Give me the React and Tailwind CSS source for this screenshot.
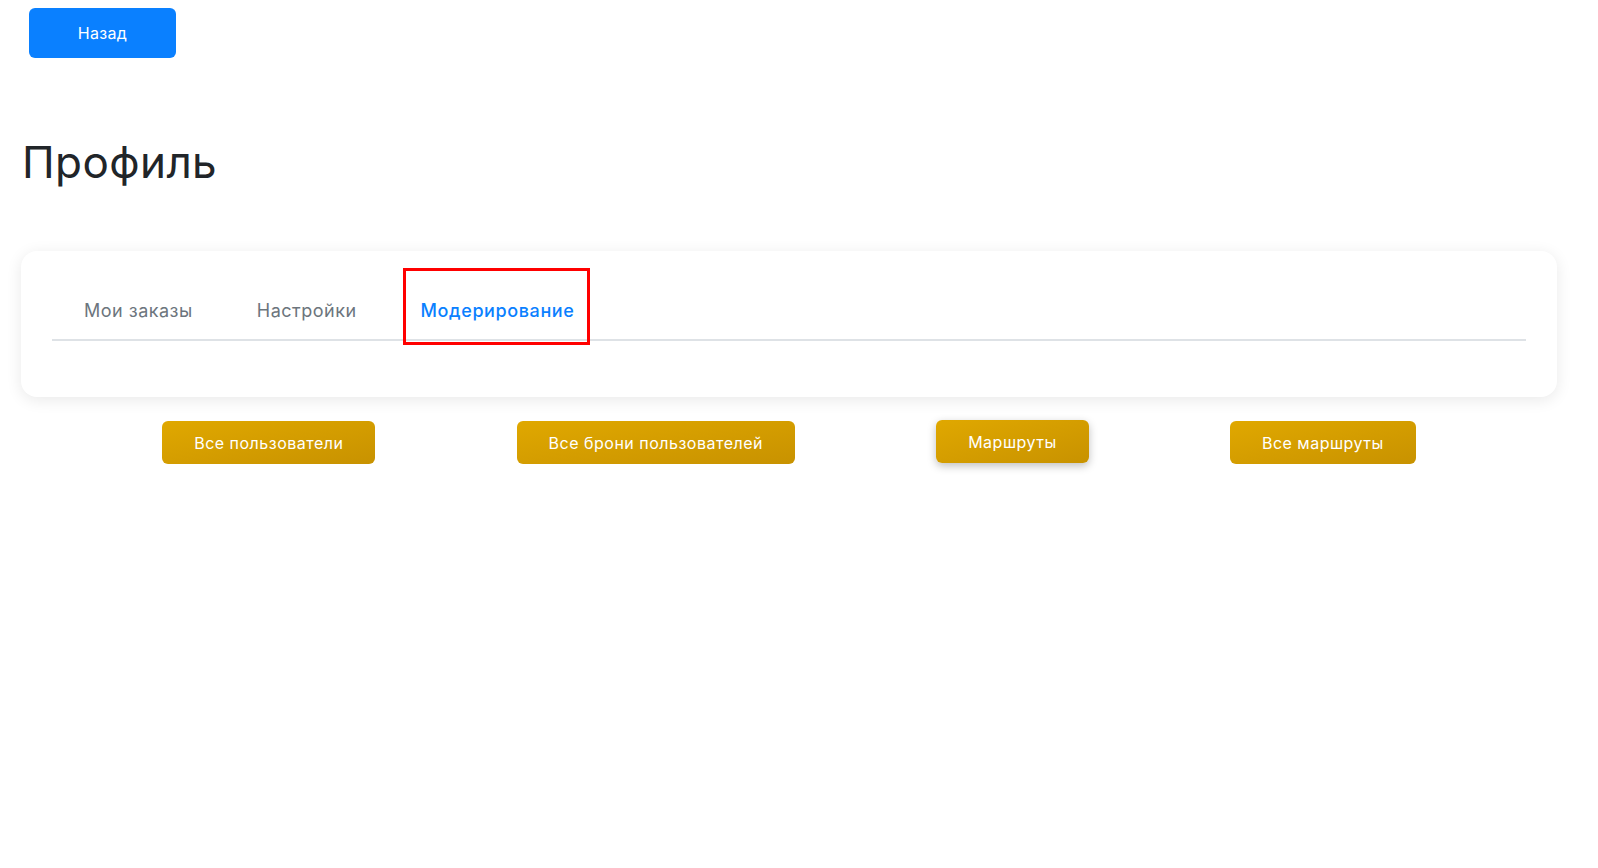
import React, { useState } from "react";

const tabs = ["Мои заказы", "Настройки", "Модерирование"];
const actions = ["Все пользователи", "Все брони пользователей", "Маршруты", "Все маршруты"];

const App = () => {
  const [active, setActive] = useState(2);

  return (
    <main className="min-h-screen bg-white font-['Inter',sans-serif] text-[#212529]">
      <div className="px-[29px] pt-[8px]">
        <button className="h-[50px] w-[147px] rounded-md bg-[#0a80ff] text-[16px] tracking-[0.3px] text-white">
          Назад
        </button>
      </div>

      <h1 className="mt-[78px] pl-[22px] text-[44px] font-normal leading-[53px] tracking-[0.4px] text-[#212529]">
        Профиль
      </h1>

      <div className="ml-[21px] mr-[41px] mt-[62px]">
        <section className="rounded-2xl bg-white px-[31px] pb-[56px] pt-[17px] shadow-[0_3px_16px_rgba(0,0,0,0.09)]">
          <div className="flex border-b-2 border-[#dee2e6]">
            {tabs.map((tab, i) => (
              <button
                key={tab}
                onClick={() => setActive(i)}
                className={
                  i === active
                    ? "relative px-8 pb-[15px] pt-[29px] text-[18px] font-medium tracking-[0.6px] text-[#0a80ff]"
                    : "px-8 pb-[15px] pt-[29px] text-[18px] tracking-[0.5px] text-[#6c757d]"
                }
              >
                {tab}
                {i === active && (
                  <span className="pointer-events-none absolute bottom-[-6px] left-[14px] right-[16px] top-0 border-[3px] border-[#ff0000]" />
                )}
              </button>
            ))}
          </div>
        </section>

        <div className="mt-[24px] flex items-start justify-evenly">
          {actions.map((label) => (
            <button
              key={label}
              className={
                label === "Маршруты"
                  ? "-mt-px h-[43px] rounded-md bg-gradient-to-br from-[#e0a800] to-[#c89200] px-[32px] text-[16px] tracking-[0.5px] text-white shadow-[0_3px_8px_rgba(0,0,0,0.25)]"
                  : "h-[43px] rounded-md bg-gradient-to-br from-[#e0a800] to-[#c89200] px-[32px] text-[16px] tracking-[0.5px] text-white"
              }
            >
              {label}
            </button>
          ))}
        </div>
      </div>
    </main>
  );
};

export default App;
